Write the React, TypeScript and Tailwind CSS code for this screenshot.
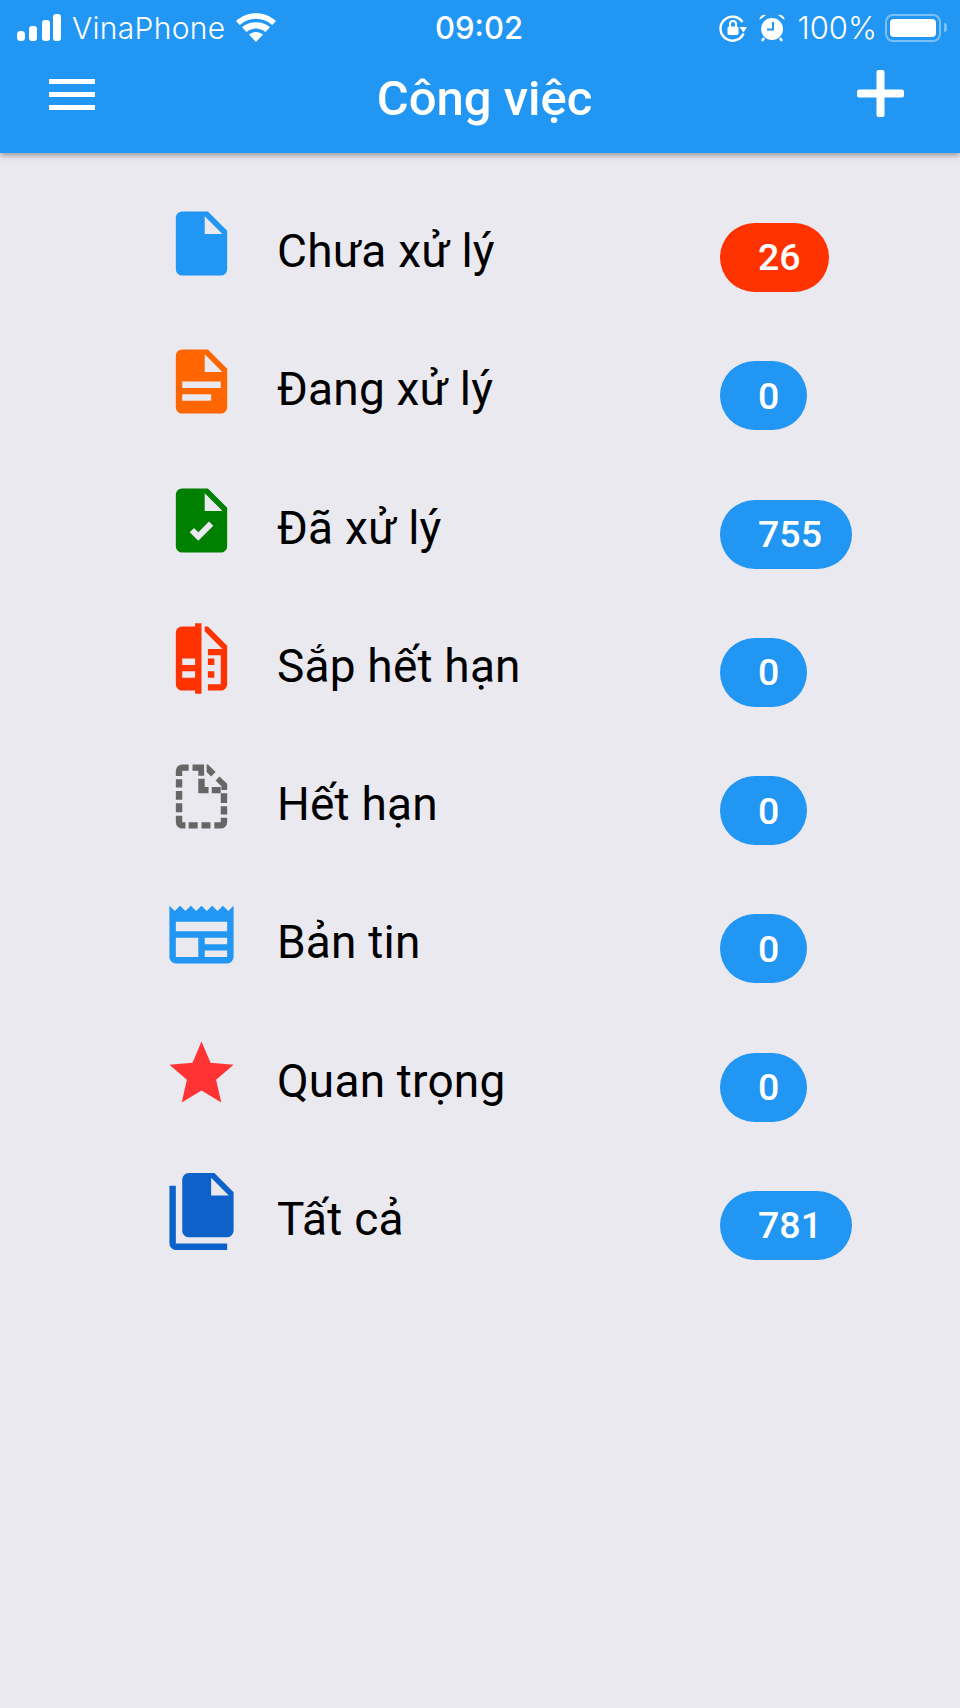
import type { ReactNode } from "react";

const FILE = "M13,9V3.5L18.5,9M6,2C4.89,2 4,2.89 4,4V20A2,2 0 0,0 6,22H18A2,2 0 0,0 20,20V8L14,2H6Z";

const ROWS: { label: string; count: string; badge: string; icon: ReactNode; color: string }[] = [
  { label: "Chưa xử lý", count: "26", badge: "bg-[#ff3300] w-[109px]", color: "#2196f3", icon: <path d={FILE} /> },
  {
    label: "Đang xử lý",
    count: "0",
    badge: "bg-[#2196f3] w-[87px]",
    color: "#ff6600",
    icon: <path d="M13,9H18.5L13,3.5V9M6,2H14L20,8V20A2,2 0 0,1 18,22H6C4.89,22 4,21.1 4,20V4C4,2.89 4.89,2 6,2M15,18V16H6V18H15M18,14V12H6V14H18Z" />,
  },
  {
    label: "Đã xử lý",
    count: "755",
    badge: "bg-[#2196f3] w-[132px]",
    color: "#008000",
    icon: (
      <>
        <path d={FILE} />
        <path d="M9,15L11,17L15,13" fill="none" stroke="#eae9f0" strokeWidth="1.9" />
      </>
    ),
  },
  {
    label: "Sắp hết hạn",
    count: "0",
    badge: "bg-[#2196f3] w-[87px]",
    color: "#ff3300",
    icon: <path d="M10,18H6V16H10V18M10,14H6V12H10V14M10,1V2H6C4.89,2 4,2.89 4,4V20C4,21.1 4.9,22 6,22H10V23H12V1H10M20,8V20C20,21.11 19.11,22 18,22H14V20H18V11H14V9H18.5L13,3.5V2H14L20,8M16,14H14V12H16V14M16,18H14V16H16V18Z" />,
  },
  {
    label: "Hết hạn",
    count: "0",
    badge: "bg-[#2196f3] w-[87px]",
    color: "#666666",
    icon: (
      <path d="M4,4A2,2 0 0,1 6,2H8V4H6V5.6H4V4ZM4,6.6H6V9.2H4ZM4,10.3H6V13H4ZM4,14.1H6V16.9H4ZM4,18H6V20H7V22H6A2,2 0 0,1 4,20V18ZM8,20H10.8V22H8ZM12,20H14.8V22H12ZM16,20H18V18.6H20V20A2,2 0 0,1 18,22H16V20ZM18,15H20V17.6H18ZM18,11H20V14H18ZM9.2,2H12.8V5.5H11V4H9.2ZM11,6.5H13V9H14.2V11H11ZM15.2,9H18V11H15.2ZM17.6,5.8L20,8V10H18.2V8.8L16.4,7ZM14,2L16.4,4.4L15,5.8L13.6,4.4V2Z" />
    ),
  },
  {
    label: "Bản tin",
    count: "0",
    badge: "bg-[#2196f3] w-[87px]",
    color: "#2196f3",
    icon: <path d="M20,11H4V8H20M20,15H13V13H20M20,19H13V17H20M11,19H4V13H11M20.33,4.67L18.67,3L17,4.67L15.33,3L13.67,4.67L12,3L10.33,4.67L8.67,3L7,4.67L5.33,3L3.67,4.67L2,3V19A2,2 0 0,0 4,21H20A2,2 0 0,0 22,19V3L20.33,4.67Z" />,
  },
  {
    label: "Quan trọng",
    count: "0",
    badge: "bg-[#2196f3] w-[87px]",
    color: "#ff3333",
    icon: <path d="M12,17.27L18.18,21L16.54,13.97L22,9.24L14.81,8.62L12,2L9.19,8.62L2,9.24L7.45,13.97L5.82,21L12,17.27Z" />,
  },
  {
    label: "Tất cả",
    count: "781",
    badge: "bg-[#2196f3] w-[132px]",
    color: "#0d62c9",
    icon: <path d="M15,7H20.5L15,1.5V7M8,0H16L22,6V18A2,2 0 0,1 20,20H8C6.89,20 6,19.1 6,18V2A2,2 0 0,1 8,0M4,4V22H20V24H4A2,2 0 0,1 2,22V4H4Z" />,
  },
];

function StatusBar() {
  return (
    <div className="grid h-[54px] grid-cols-[1fr_auto_1fr] items-center pl-[17px] pr-[13px] pt-[1px] font-['Inter',sans-serif] text-white">
      <div className="flex items-center">
        <svg width="47" height="28" viewBox="0 0 47 28" fill="#fff">
          <rect x="0" y="17" width="8" height="10" rx="3.5" />
          <rect x="12" y="12" width="8" height="15" rx="3" />
          <rect x="25" y="6" width="8" height="21" rx="3" />
          <rect x="36" y="0" width="8" height="27" rx="3" />
        </svg>
        <span className="ml-[8px] text-[30px] font-light leading-none tracking-[0.3px]">VinaPhone</span>
        <svg className="ml-[11px]" width="40" height="30" viewBox="0 0 40 30" fill="#fff">
          <path d="M20,29L13,21.5C17,18 23,18 27,21.5Z" />
          <path d="M10.5,19L6,14.3C13.5,7.5 26.5,7.5 34,14.3L29.5,19C24,14.3 16,14.3 10.5,19Z" />
          <path d="M3.8,12L0,8C11,-2.5 29,-2.5 40,8L36.2,12C27,3.5 13,3.5 3.8,12Z" />
        </svg>
      </div>
      <span className="mr-[6px] text-[31px] font-medium leading-none">09:02</span>
      <div className="flex items-center justify-self-end">
        <svg width="28" height="28" viewBox="0 0 28 28" fill="none" stroke="#fff" strokeWidth="2.4">
          <path d="M23.5,8A12,12 0 1,0 24.5,19.5" />
          <path d="M20.5,13H28L24.5,18.5Z" fill="#fff" stroke="none" />
          <rect x="8.5" y="12.5" width="11" height="8.5" rx="1.5" fill="#fff" stroke="none" />
          <path d="M11,13V10A3,3 0 0,1 17,10V13" strokeWidth="2" />
        </svg>
        <svg className="ml-[12px]" width="26" height="28" viewBox="0 0 26 28" fill="#fff">
          <circle cx="13" cy="15" r="11" />
          <path d="M0.5,6A5,5 0 0,1 7,1ZM25.5,6A5,5 0 0,0 19,1Z" />
          <path d="M14,8V15.5H8" fill="none" stroke="#2196f3" strokeWidth="2" />
          <path d="M5,24L3,27M21,24L23,27" stroke="#fff" strokeWidth="2.4" />
        </svg>
        <span className="ml-[12px] text-[31px] font-light leading-none">100%</span>
        <div className="ml-[8px] flex h-[28px] w-[56px] items-center rounded-[8px] border-2 border-white/40 p-[3px]">
          <div className="h-full w-full rounded-[4px] bg-white" />
        </div>
        <div className="ml-[3px] h-[9px] w-[3px] rounded-r-full bg-white/40" />
      </div>
    </div>
  );
}

function Header() {
  return (
    <header className="relative h-[153px] bg-[#2196f3] shadow-[0_3px_5px_rgba(0,0,0,0.3)]">
      <StatusBar />
      <div className="flex items-start justify-between pl-[49px] pr-[56px]">
        <div className="mt-[25px] flex w-[46px] flex-col gap-[8px]">
          <div className="h-[5px] bg-white" />
          <div className="h-[5px] bg-white" />
          <div className="h-[5px] bg-white" />
        </div>
        <h1 className="ml-[17px] mt-[15px] font-['Roboto',sans-serif] text-[49px] font-medium leading-[60px] text-white">Công việc</h1>
        <svg className="mt-[16px]" width="47" height="47" viewBox="0 0 47 47" fill="#fff">
          <rect x="19.5" y="0" width="8" height="47" rx="2" />
          <rect x="0" y="19.5" width="47" height="8" rx="2" />
        </svg>
      </div>
    </header>
  );
}

export default function App() {
  return (
    <div className="flex min-h-[1708px] flex-col bg-[#eae9f0] font-['Roboto',sans-serif] text-black">
      <Header />
      <main className="pl-[163px] pt-[52px]">
        {ROWS.map((row) => (
          <div key={row.label} className="flex h-[138.3px] items-start">
            <svg width="77" height="77" viewBox="0 0 24 24" fill={row.color} className="shrink-0">
              {row.icon}
            </svg>
            <div className="ml-[37px] w-[443px] pt-[16px] text-[46px] leading-[60px] tracking-[0.2px]">{row.label}</div>
            <div className={`mt-[18px] flex h-[69px] items-center rounded-full pl-[38px] text-[37.5px] font-medium text-white ${row.badge}`}>
              {row.count}
            </div>
          </div>
        ))}
      </main>
    </div>
  );
}
